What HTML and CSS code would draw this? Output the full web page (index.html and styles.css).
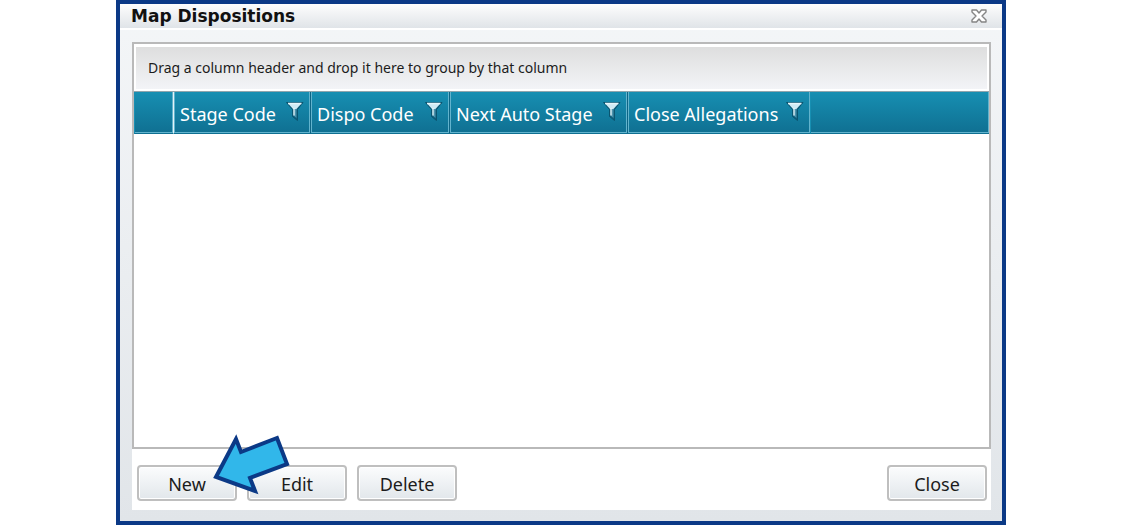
FILE: index.html
```html
<!DOCTYPE html>
<html lang="en">
<head>
    <meta charset="UTF-8">
    <meta name="viewport" content="width=device-width, initial-scale=1.0">
    <title>Map Dispositions</title>
    <link rel="stylesheet" href="styles.css">
</head>
<body>
    <svg class="icon-defs" aria-hidden="true">
        <symbol id="funnel" viewBox="0 0 18 20">
            <path d="M0.5 1.5H17L11.5 8.5V19.5L6.5 15.5V8.5Z" fill="#0e5f7d" stroke="#0a5570"/>
            <path d="M2.5 3H15L10 8.5H7.5Z" fill="#cfeaf4"/>
            <path d="M7.5 8H10.5V17L7.5 14.5Z" fill="#4d93ad"/>
            <path d="M8 7V14.5M2 2.5H15.5" fill="none" stroke="#e6f6fb" stroke-width="1.3"/>
        </symbol>
    </svg>

    <main class="window">
        <header class="title-bar">
            <h1>Map Dispositions</h1>
            <button class="window-close" aria-label="Close window">
                <svg viewBox="0 0 16 14" fill="#fff" stroke="#858585" stroke-width="1.4" stroke-linejoin="round">
                    <path d="M1 1H5.5L8 4L10.5 1H15V3L11 7L15 11V13H10.5L8 10L5.5 13H1V11L5 7L1 3Z"/>
                </svg>
            </button>
        </header>

        <div class="window-body">
            <section class="grid">
                <div class="group-panel">Drag a column header and drop it here to group by that column</div>
                <table class="grid-table">
                    <colgroup>
                        <col class="col-indicator">
                        <col class="col-stage">
                        <col class="col-dispo">
                        <col class="col-next">
                        <col class="col-close">
                        <col>
                    </colgroup>
                    <thead>
                        <tr>
                            <td></td>
                            <th scope="col"><div class="head">Stage Code <button class="filter-btn" aria-label="Filter Stage Code"><svg><use href="#funnel"/></svg></button></div></th>
                            <th scope="col"><div class="head">Dispo Code <button class="filter-btn" aria-label="Filter Dispo Code"><svg><use href="#funnel"/></svg></button></div></th>
                            <th scope="col"><div class="head">Next Auto Stage <button class="filter-btn" aria-label="Filter Next Auto Stage"><svg><use href="#funnel"/></svg></button></div></th>
                            <th scope="col"><div class="head">Close Allegations <button class="filter-btn" aria-label="Filter Close Allegations"><svg><use href="#funnel"/></svg></button></div></th>
                            <td></td>
                        </tr>
                    </thead>
                </table>
            </section>

            <footer class="actions">
                <button class="btn">New</button>
                <button class="btn">Edit</button>
                <button class="btn">Delete</button>
                <button class="btn btn-close">Close</button>

                <!-- Pointer to the New button -->
                <svg class="arrow" viewBox="0 0 78 62" aria-hidden="true">
                    <path d="M4 43L24 5L29 18L65 4L75 30L38 44L43 57Z" fill="#31b7ea" stroke="#0b3986" stroke-width="4"/>
                </svg>
            </footer>
        </div>
    </main>
</body>
</html>
```

FILE: styles.css
```css
* {
    margin: 0;
    padding: 0;
    box-sizing: border-box;
}

body {
    display: flex;
    min-height: 100vh;
    padding: 0 118px 1px 116px;
    background: #fff;
    color: #1c1c1c;
    font-family: "Noto Sans", "Open Sans", sans-serif;
}

button {
    font-family: inherit;
    cursor: pointer;
}

.icon-defs {
    position: absolute;
    width: 0;
    height: 0;
}

.window {
    flex: 1;
    display: flex;
    flex-direction: column;
    min-width: 0;
    border: 4px solid #0b3986;
    background: linear-gradient(#f4f6f8, #e1e5e9);
}

.title-bar {
    display: flex;
    justify-content: space-between;
    align-items: center;
    height: 26px;
    padding: 0 15px 0 11px;
    border-bottom: 2px solid #fff;
    background: linear-gradient(#fdfdfd, #e0e4e8);
}

.title-bar h1 {
    font-family: "DejaVu Sans", sans-serif;
    font-size: 17px;
    font-weight: 700;
    line-height: 24px;
    color: #111;
}

.window-close {
    width: 16px;
    height: 14px;
    border: none;
    background: transparent;
}

.window-close svg {
    display: block;
    width: 100%;
    height: 100%;
}

.window-body {
    flex: 1;
    display: flex;
    flex-direction: column;
    padding: 12px 11px 11px 12px;
}

.grid {
    flex: 1;
    border: 2px solid #b9b9b9;
    background: #fff;
}

.group-panel {
    height: 47px;
    padding: 0 12px;
    border: 2px solid #fff;
    border-top-width: 3px;
    background: linear-gradient(#dedede, #f3f4f7);
    font-size: 14px;
    line-height: 41px;
    white-space: nowrap;
}

/* Column headers */
.grid-table {
    width: 100%;
    border-collapse: separate;
    border-spacing: 0;
    border-top: 1px solid #8fa5ad;
    table-layout: fixed;
}

.col-indicator { width: 39px; }
.col-stage { width: 137px; }
.col-dispo { width: 139px; }
.col-next { width: 178px; }
.col-close { width: 183px; }

.grid-table tr {
    background: linear-gradient(#178fb2, #0f6f91);
}

.grid-table th,
.grid-table td {
    height: 42px;
    border-left: 1px solid #0d6585;
    border-bottom: 1px solid #0f7092;
    box-shadow: inset 1px 0 #62b3cd, inset -1px -1px #62b3cd;
}

.grid-table th:nth-child(2) {
    border-left-color: #e2f2f7;
}

.grid-table td {
    border-left-color: #178fb2;
    box-shadow: inset -1px -1px #62b3cd;
}

.head {
    display: flex;
    justify-content: space-between;
    align-items: center;
    padding: 3px 6px 0 6px;
    color: #fff;
    font-size: 18px;
    font-weight: 400;
    line-height: 26px;
    white-space: nowrap;
}

.filter-btn {
    width: 18px;
    height: 28px;
    border: none;
    background: transparent;
}

.filter-btn svg {
    display: block;
    width: 18px;
    height: 20px;
    margin-bottom: 6px;
}

/* Bottom buttons */
.actions {
    position: relative;
    display: flex;
    gap: 10px;
    padding: 16px 4px 9px 5px;
    background: #fff;
}

.btn {
    width: 100px;
    height: 36px;
    padding-top: 2px;
    border: 2px solid #bfbfbf;
    border-radius: 4px;
    background: linear-gradient(#fbfcfd, #e2e7eb);
    box-shadow: inset 0 0 0 1px #fff;
    color: #1c1c1c;
    font-size: 18px;
    line-height: 30px;
}

.btn-close {
    margin-left: auto;
}

.arrow {
    position: absolute;
    top: -15px;
    left: 80px;
    width: 78px;
    height: 62px;
}
```
